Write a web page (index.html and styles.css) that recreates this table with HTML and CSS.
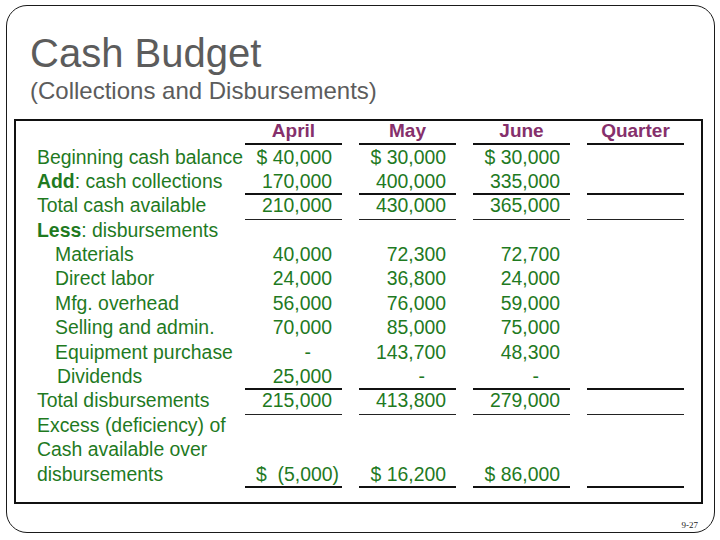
FILE: index.html
```html
<!DOCTYPE html>
<html>
<head>
<meta charset="utf-8">
<link rel="stylesheet" href="styles.css">
</head>
<body>
<div class="frame">
  <h1 class="title">Cash Budget</h1>
  <div class="subtitle">(Collections and Disbursements)</div>
  <div class="box">
    <div class="grid">
      <div></div>
      <div class="hd">April</div>
      <div class="hd">May</div>
      <div class="hd">June</div>
      <div class="hd">Quarter</div>

      <div class="lab">Beginning cash balance</div>
      <div class="num">$ 40,000</div>
      <div class="num">$ 30,000</div>
      <div class="num">$ 30,000</div>
      <div></div>

      <div class="lab"><b>Add</b>: cash collections</div>
      <div class="num u2">170,000</div>
      <div class="num u2">400,000</div>
      <div class="num u2">335,000</div>
      <div class="u2"></div>

      <div class="lab">Total cash available</div>
      <div class="num u1">210,000</div>
      <div class="num u1">430,000</div>
      <div class="num u1">365,000</div>
      <div class="u1"></div>

      <div class="lab"><b>Less</b>: disbursements</div>
      <div></div><div></div><div></div><div></div>

      <div class="lab ind">Materials</div>
      <div class="num">40,000</div>
      <div class="num">72,300</div>
      <div class="num">72,700</div>
      <div></div>

      <div class="lab ind">Direct labor</div>
      <div class="num">24,000</div>
      <div class="num">36,800</div>
      <div class="num">24,000</div>
      <div></div>

      <div class="lab ind">Mfg. overhead</div>
      <div class="num">56,000</div>
      <div class="num">76,000</div>
      <div class="num">59,000</div>
      <div></div>

      <div class="lab ind">Selling and admin.</div>
      <div class="num">70,000</div>
      <div class="num">85,000</div>
      <div class="num">75,000</div>
      <div></div>

      <div class="lab ind">Equipment purchase</div>
      <div class="num dash">-</div>
      <div class="num">143,700</div>
      <div class="num">48,300</div>
      <div></div>

      <div class="lab ind2">Dividends</div>
      <div class="num u2">25,000</div>
      <div class="num dash u2">-</div>
      <div class="num dash u2">-</div>
      <div class="u2"></div>

      <div class="lab">Total disbursements</div>
      <div class="num u1">215,000</div>
      <div class="num u1">413,800</div>
      <div class="num u1">279,000</div>
      <div class="u1"></div>

      <div class="lab">Excess (deficiency) of</div>
      <div></div><div></div><div></div><div></div>

      <div class="lab">Cash available over</div>
      <div></div><div></div><div></div><div></div>

      <div class="lab">disbursements</div>
      <div class="num paren u2">$&nbsp; (5,000)</div>
      <div class="num u2">$ 16,200</div>
      <div class="num u2">$ 86,000</div>
      <div class="u2"></div>
    </div>
  </div>
  <div class="pageno">9-27</div>
</div>
</body>
</html>
```

FILE: styles.css
```css
* { box-sizing: border-box; }
html, body { margin: 0; padding: 0; background: #ffffff; }
body { font-family: "Liberation Sans", Arial, sans-serif; }

.frame {
  margin: 5px 0 0 6px;
  width: 709px;
  height: 528px;
  border: 1px solid #1a1a1a;
  border-radius: 21px;
  display: flex;
  flex-direction: column;
}

.title {
  margin: 27px 0 0 23px;
  font-size: 40px;
  line-height: 40px;
  font-weight: normal;
  color: #5c5c5c;
}

.subtitle {
  margin: 6px 0 0 23px;
  font-size: 24px;
  line-height: 24px;
  color: #5c5c5c;
}

.box {
  margin: 16px 0 0 7px;
  width: 689px;
  border: 2px solid #111;
  padding: 0 0 14px 21px;
}

.grid {
  display: grid;
  grid-template-columns: 191px repeat(4, 97px);
  column-gap: 17px;
  grid-template-rows: 25.5px repeat(14, 24.4px);
  font-size: 19.4px;
  line-height: 21px;
  color: #1f7a1f;
  white-space: nowrap;
}

.hd {
  align-self: start;
  height: 24px;
  border-bottom: 2px solid #111;
  text-align: center;
  font-weight: bold;
  font-size: 19px;
  line-height: 20px;
  color: #86306c;
}

.lab b { font-weight: bold; }
.ind { padding-left: 18px; }
.ind2 { padding-left: 20px; }

.num { text-align: right; padding-right: 10px; }
.num.dash { padding-right: 31px; }
.num.paren { padding-right: 3px; }

.u2 { border-bottom: 2px solid #111; }
.u1 { border-bottom: 1px solid #222; }

.pageno {
  margin-top: 16.5px;
  text-align: right;
  padding-right: 16px;
  font-family: "Liberation Serif", "Times New Roman", serif;
  font-size: 9px;
  line-height: 10px;
  color: #222;
}
```
